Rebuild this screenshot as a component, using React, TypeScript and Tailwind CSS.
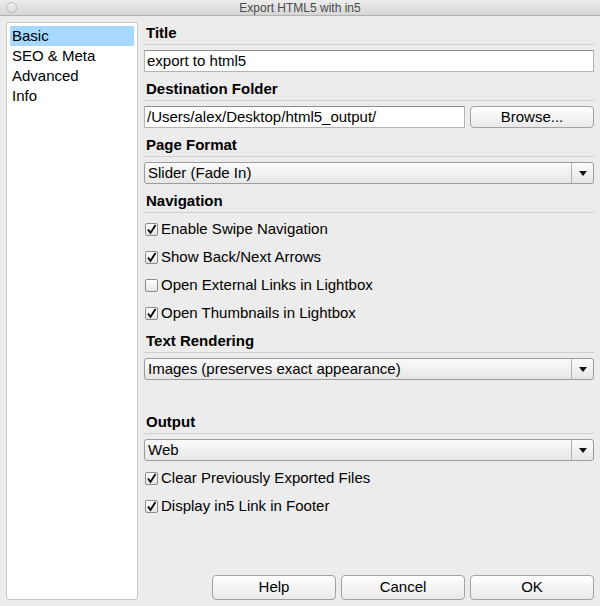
import React from "react";

const font = { fontFamily: '"Liberation Sans", Arial, sans-serif' };

function SectionHeader({ label, className = "" }: { label: string; className?: string }) {
  return (
    <div className={`h-[23px] flex items-end border-b border-[#d0d0d0] pl-[2px] ${className}`}>
      <span className="text-[15px] leading-[20px] font-bold text-black pb-[1px]">{label}</span>
    </div>
  );
}

function TextField({ value, className = "" }: { value: string; className?: string }) {
  return (
    <div
      className={`h-[22px] bg-white border border-[#b4b4b4] border-t-[#8e8e8e] flex items-center px-[2px] text-[15px] text-black ${className}`}
    >
      {value}
    </div>
  );
}

function Select({ value, className = "" }: { value: string; className?: string }) {
  return (
    <div
      className={`h-[22px] flex items-stretch rounded-[3px] border border-[#9c9c9c] bg-gradient-to-b from-[#fbfbfb] to-[#e6e6e6] ${className}`}
    >
      <div className="flex-1 flex items-center px-[3px] text-[15px] text-black">{value}</div>
      <div className="w-[22px] border-l border-[#b0b0b0] flex items-center justify-center">
        <svg width="8" height="5" viewBox="0 0 8 5">
          <path d="M0 0 L8 0 L4 5 Z" fill="#111" />
        </svg>
      </div>
    </div>
  );
}

function Checkbox({ label, checked }: { label: string; checked: boolean }) {
  return (
    <div className="h-[28px] flex items-center pl-[1px]">
      <div className="w-[13px] h-[13px] border border-[#8c8c8c] rounded-[2px] bg-gradient-to-b from-[#ffffff] to-[#e4e4e4] flex items-center justify-center">
        {checked && (
          <svg width="11" height="11" viewBox="0 0 11 11">
            <path d="M2 5.5 L4.5 9 L9.5 1" stroke="#000" strokeWidth="1.8" fill="none" />
          </svg>
        )}
      </div>
      <span className="ml-[3px] text-[15px] text-black">{label}</span>
    </div>
  );
}

function Button({ label, className = "h-[25px]" }: { label: string; className?: string }) {
  return (
    <div
      className={`w-[124px] rounded-[4px] border border-[#a2a2a2] bg-gradient-to-b from-[#ffffff] to-[#e9e9e9] flex items-center justify-center text-[15px] text-black ${className}`}
    >
      {label}
    </div>
  );
}

export default function App() {
  const nav = ["Basic", "SEO & Meta", "Advanced", "Info"];

  return (
    <div className="w-[600px] h-[606px] bg-[#ececec] flex flex-col overflow-hidden" style={font}>
      {/* Title bar */}
      <div className="h-[16px] relative flex items-center justify-center bg-gradient-to-b from-[#ececec] to-[#d6d6d6] border-b border-[#b2b2b2]">
        <div className="absolute left-[6px] top-[2px] w-[11px] h-[11px] rounded-full border border-[#b8b8b8] bg-gradient-to-b from-[#f0f0f0] to-[#dcdcdc]" />
        <span className="text-[12px] leading-[14px] text-[#4a4a4a]">Export HTML5 with in5</span>
      </div>

      <div className="flex flex-1 pt-[6px] pb-[6px]">
        {/* Sidebar */}
        <div className="ml-[6px] w-[132px] h-[578px] bg-white border border-[#c8c8c8] rounded-[3px] pt-[3px] px-[3px]">
          {nav.map((item, i) => (
            <div
              key={item}
              className={`h-[20px] flex items-center pl-[2px] text-[15px] text-black ${i === 0 ? "bg-[#a7d8ff]" : ""}`}
            >
              {item}
            </div>
          ))}
        </div>

        {/* Main form */}
        <div className="ml-[6px] w-[450px] flex flex-col">
          <SectionHeader label="Title" />
          <TextField value="export to html5" className="mt-[5px]" />

          <SectionHeader label="Destination Folder" className="mt-[6px]" />
          <div className="mt-[5px] flex gap-[5px]">
            <TextField value="/Users/alex/Desktop/html5_output/" className="w-[321px]" />
            <Button label="Browse..." className="h-[22px]" />
          </div>

          <SectionHeader label="Page Format" className="mt-[6px]" />
          <Select value="Slider (Fade In)" className="mt-[5px]" />

          <SectionHeader label="Navigation" className="mt-[6px]" />
          <div className="mt-[2px] flex flex-col">
            <Checkbox label="Enable Swipe Navigation" checked />
            <Checkbox label="Show Back/Next Arrows" checked />
            <Checkbox label="Open External Links in Lightbox" checked={false} />
            <Checkbox label="Open Thumbnails in Lightbox" checked />
          </div>

          <SectionHeader label="Text Rendering" className="mt-[3px]" />
          <Select value="Images (preserves exact appearance)" className="mt-[5px]" />

          <SectionHeader label="Output" className="mt-[31px]" />
          <Select value="Web" className="mt-[5px]" />
          <div className="mt-[3px] flex flex-col">
            <Checkbox label="Clear Previously Exported Files" checked />
            <Checkbox label="Display in5 Link in Footer" checked />
          </div>

          <div className="mt-auto flex justify-end gap-[5px]">
            <Button label="Help" />
            <Button label="Cancel" />
            <Button label="OK" />
          </div>
        </div>
      </div>
    </div>
  );
}
